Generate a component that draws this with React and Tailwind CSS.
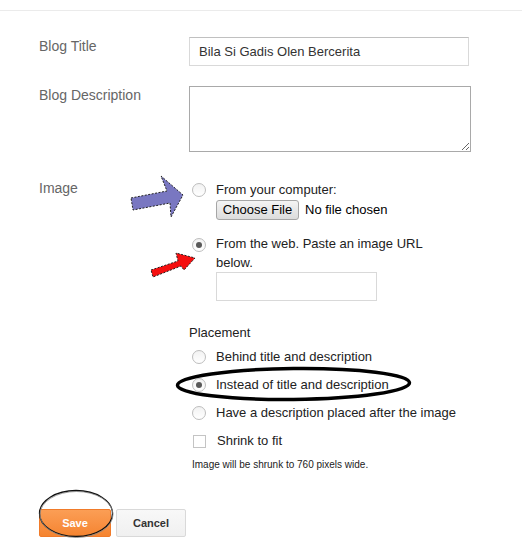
import React from "react";

function Radio({ checked }) {
  return (
    <div className="ml-[3px] w-[14px] h-[14px] shrink-0 rounded-full border border-[#bdbdbd] bg-gradient-to-b from-[#f2f2f2] to-white flex items-center justify-center">
      {checked ? <div className="w-[6px] h-[6px] rounded-full bg-[#595959]" /> : null}
    </div>
  );
}

function OptionRow({ checked, children }) {
  return (
    <div className="h-[28px] flex items-center">
      <Radio checked={checked} />
      <span className="ml-[10px] text-[#222]">{children}</span>
    </div>
  );
}

export default function App() {
  return (
    <div
      className="relative w-[522px] h-[544px] bg-white overflow-hidden text-[13px] leading-[16px] text-[#333]"
      style={{ fontFamily: '"Liberation Sans", Arial, sans-serif' }}
    >
      <div className="h-[11px] border-b border-[#ebebeb]" />

      <div className="pl-[39px]">
        {/* Blog Title */}
        <div className="mt-[26px] flex items-start">
          <div className="w-[150px] pt-[1px] text-[14px] text-[#666]">Blog Title</div>
          <div className="w-[280px] h-[29px] border border-[#d9d9d9] border-t-[#c0c0c0] px-[9px] flex items-center text-[#333]">
            Bila Si Gadis Olen Bercerita
          </div>
        </div>

        {/* Blog Description */}
        <div className="mt-[20px] flex items-start">
          <div className="w-[150px] pt-[1px] text-[14px] text-[#666]">Blog Description</div>
          <textarea
            className="block w-[282px] h-[66px] border border-[#a9a9a9] bg-white outline-none resize"
            defaultValue=""
          />
        </div>

        {/* Image */}
        <div className="mt-[30px] flex items-start">
          <div className="w-[150px] mt-[-2px] text-[14px] text-[#666]">Image</div>
          <div className="flex flex-col">
            <div className="flex items-start">
              <div className="mt-[1px]">
                <Radio />
              </div>
              <div className="ml-[10px] flex flex-col">
                <span className="text-[#222]">From your computer:</span>
                <div className="mt-[2px] flex items-center">
                  <div className="h-[20px] w-[83px] flex items-center justify-center border border-[#a6a6a6] rounded-[3px] bg-gradient-to-b from-[#f4f4f4] to-[#dcdcdc] text-black">
                    Choose File
                  </div>
                  <span className="ml-[6px] text-black">No file chosen</span>
                </div>
              </div>
            </div>

            <div className="mt-[14px] flex items-start">
              <div className="mt-[4px]">
                <Radio checked />
              </div>
              <div className="ml-[10px] flex flex-col">
                <span className="leading-[19px] text-[#222]">
                  From the web. Paste an image URL
                  <br />
                  below.
                </span>
                <div className="w-[161px] h-[29px] border border-[#d9d9d9]" />
              </div>
            </div>

            <div className="mt-[24px] text-[#222]">Placement</div>
            <div className="mt-[2px] flex flex-col">
              <OptionRow>Behind title and description</OptionRow>
              <OptionRow checked>Instead of title and description</OptionRow>
              <OptionRow>Have a description placed after the image</OptionRow>
              <div className="h-[28px] flex items-center">
                <div className="ml-[4px] w-[13px] h-[13px] border border-[#c4c4c4] bg-white" />
                <span className="ml-[11px] text-[#222]">Shrink to fit</span>
              </div>
            </div>
            <div className="mt-[4px] ml-[3px] text-[10px] leading-[12px] text-[#222]">
              Image will be shrunk to 760 pixels wide.
            </div>
          </div>
        </div>

        {/* Buttons */}
        <div className="mt-[38px] flex gap-[5px]">
          <div className="w-[72px] h-[28px] flex items-center justify-center rounded-[2px] border border-[#f07b2a] bg-gradient-to-b from-[#fb9e55] to-[#f5842f] text-white font-bold text-[11px]">
            Save
          </div>
          <div className="w-[70px] h-[28px] flex items-center justify-center rounded-[2px] border border-[#d9d9d9] bg-gradient-to-b from-[#f8f8f8] to-[#f0f0f0] text-[#333] font-bold text-[11px]">
            Cancel
          </div>
        </div>
      </div>

      {/* Annotation overlay */}
      <svg
        className="absolute left-0 top-0 pointer-events-none"
        width="522"
        height="544"
        viewBox="0 0 522 544"
      >
        <polygon
          points="131,198 167,191 161,176 183,195 171,217 170,203 133,210"
          fill="#7977c1"
          stroke="#222"
          strokeWidth="1"
          strokeDasharray="2 1.5"
        />
        <polygon
          points="151,270 178,261 176,253 195,258 184,270 181,266 153,277"
          fill="#f50f0f"
          stroke="#222"
          strokeWidth="1"
          strokeDasharray="2 1.5"
        />
        <ellipse
          cx="293.5"
          cy="384"
          rx="116"
          ry="15.5"
          fill="none"
          stroke="#000"
          strokeWidth="3.5"
          transform="rotate(-0.6 293.5 384)"
        />
        <ellipse
          cx="76"
          cy="513.5"
          rx="36.5"
          ry="23"
          fill="none"
          stroke="#111"
          strokeWidth="1.3"
        />
        <ellipse
          cx="76.5"
          cy="514.5"
          rx="36.5"
          ry="23"
          fill="none"
          stroke="#888"
          strokeWidth="0.8"
        />
      </svg>
    </div>
  );
}
